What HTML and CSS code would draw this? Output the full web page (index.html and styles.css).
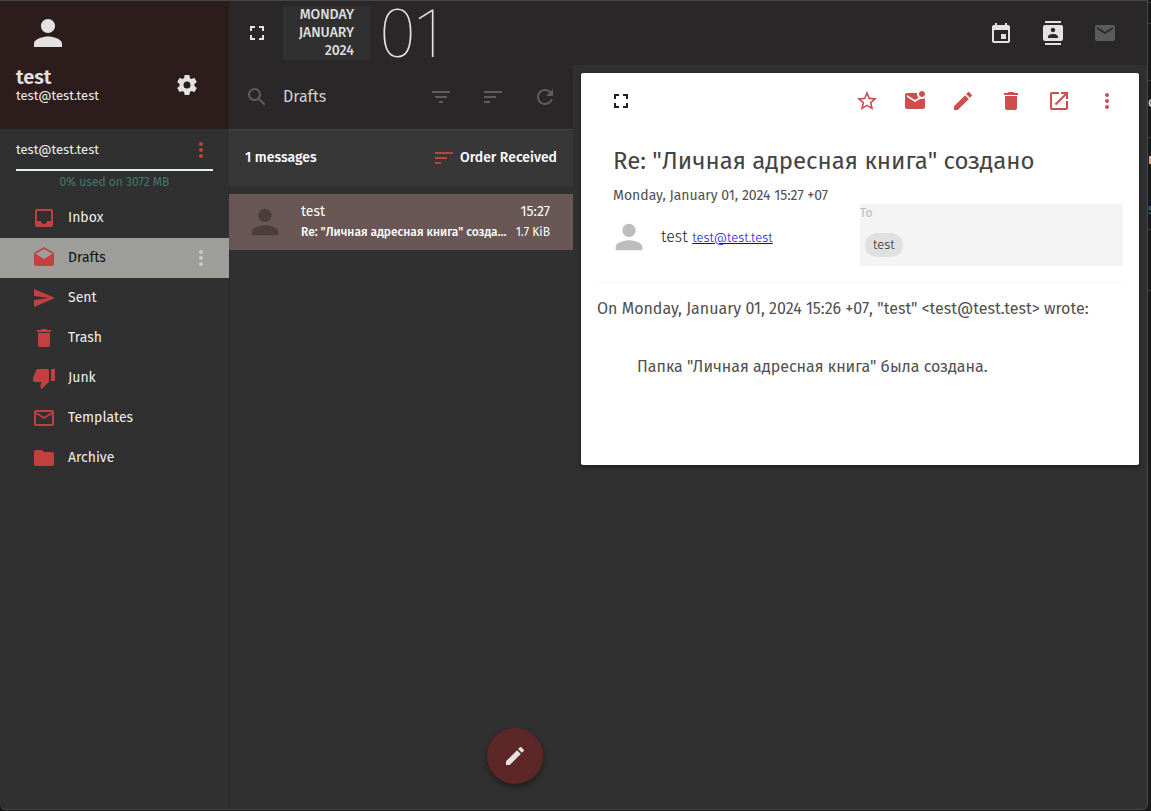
FILE: index.html
```html
<!DOCTYPE html>
<html lang="en">
<head>
<meta charset="utf-8">
<title>Mail</title>
<link rel="stylesheet" href="styles.css">
</head>
<body>
<svg class="defs" aria-hidden="true">
  <symbol id="person" viewBox="0 0 24 24"><path d="M12 12c2.21 0 4-1.79 4-4s-1.79-4-4-4-4 1.790-4 4 1.790 4 4 4zm0 2c-2.670 0-8 1.340-8 4v2h16v-2c0-2.660-5.330-4-8-4z"/></symbol>
  <symbol id="gear" viewBox="0 0 24 24"><path d="M12 15.500A3.500 3.500 0 0 1 8.500 12 3.500 3.500 0 0 1 12 8.500a3.500 3.500 0 0 1 3.500 3.500 3.500 3.500 0 0 1-3.500 3.500m7.430-2.530c.04-.32.07-.64.07-.97s-.03-.66-.07-1l2.110-1.630c.19-.15.24-.42.12-.64l-2-3.460c-.12-.22-.39-.31-.61-.22l-2.490 1c-.52-.39-1.060-.73-1.690-.98l-.37-2.650A.506.506 0 0 0 14 2h-4c-.25 0-.46.18-.5.42l-.37 2.650c-.63.25-1.170.59-1.690.98l-2.490-1c-.22-.09-.49 0-.61.22l-2 3.460c-.13.22-.07.49.12.64L4.570 11c-.04.34-.07.67-.07 1s.03.65.07.97l-2.110 1.660c-.19.15-.25.42-.12.64l2 3.460c.12.22.39.3.61.22l2.490-1.010c.52.4 1.060.74 1.690.99l.37 2.650c.04.24.25.42.5.42h4c.25 0 .46-.18.5-.42l.37-2.650c.63-.26 1.170-.59 1.690-.99l2.490 1.010c.22.08.49 0 .61-.22l2-3.460c.12-.22.07-.49-.12-.64z"/></symbol>
  <symbol id="more" viewBox="0 0 24 24"><path d="M12 8c1.100 0 2-.9 2-2s-.9-2-2-2-2 .9-2 2 .9 2 2 2zm0 2c-1.100 0-2 .9-2 2s.9 2 2 2 2-.9 2-2-.9-2-2-2zm0 6c-1.100 0-2 .9-2 2s.9 2 2 2 2-.9 2-2-.9-2-2-2z"/></symbol>
  <symbol id="inbox" viewBox="0 0 24 24"><path d="M19 3H5c-1.100 0-2 .9-2 2v14c0 1.100.9 2 2 2h14c1.100 0 2-.9 2-2V5c0-1.100-.9-2-2-2zm0 12h-4c0 1.660-1.350 3-3 3s-3-1.340-3-3H5V5h14v10z"/></symbol>
  <symbol id="drafts" viewBox="0 0 24 24"><path d="M21.990 8c0-.72-.37-1.350-.94-1.700L12 1 2.950 6.300C2.380 6.650 2 7.280 2 8v10c0 1.100.9 2 2 2h16c1.100 0 2-.9 2-2l-.01-10zM12 13L3.740 7.840 12 3l8.260 4.840L12 13z"/></symbol>
  <symbol id="send" viewBox="0 0 24 24"><path d="M2.010 21L23 12 2.010 3 2 10l15 2-15 2z"/></symbol>
  <symbol id="trash" viewBox="0 0 24 24"><path d="M6 19c0 1.100.9 2 2 2h8c1.100 0 2-.9 2-2V7H6v12zM19 4h-3.500l-1-1h-5l-1 1H5v2h14V4z"/></symbol>
  <symbol id="junk" viewBox="0 0 24 24"><path d="M15 3H6c-.83 0-1.540.5-1.840 1.220l-3.020 7.050c-.09.23-.14.47-.14.73v2c0 1.100.9 2 2 2h6.310l-.95 4.570-.03.32c0 .41.17.79.44 1.060L9.830 23l6.590-6.590c.36-.36.58-.86.58-1.410V5c0-1.100-.9-2-2-2zm4 0v12h4V3h-4z"/></symbol>
  <symbol id="mail-outline" viewBox="0 0 24 24"><path d="M20 4H4c-1.100 0-2 .9-2 2v12c0 1.100.9 2 2 2h16c1.100 0 2-.9 2-2V6c0-1.100-.9-2-2-2zm0 14H4V8l8 5 8-5v10zm-8-7L4 6h16l-8 5z"/></symbol>
  <symbol id="folder" viewBox="0 0 24 24"><path d="M10 4H4c-1.100 0-2 .9-2 2v12c0 1.100.9 2 2 2h16c1.100 0 2-.9 2-2V8c0-1.100-.9-2-2-2h-8l-2-2z"/></symbol>
  <symbol id="fullscreen" viewBox="0 0 24 24"><path d="M7 14H5v5h5v-2H7v-3zm-2-4h2V7h3V5H5v5zm12 7h-3v2h5v-5h-2v3zM14 5v2h3v3h2V5h-5z"/></symbol>
  <symbol id="search" viewBox="0 0 24 24"><path d="M15.500 14h-.79l-.28-.27C15.410 12.590 16 11.110 16 9.500 16 5.910 13.090 3 9.500 3S3 5.910 3 9.500 5.910 16 9.500 16c1.610 0 3.090-.59 4.230-1.570l.27.28v.79l5 4.990L20.490 19l-4.990-5zm-6 0C7.010 14 5 11.990 5 9.500S7.010 5 9.500 5 14 7.010 14 9.500 11.990 14 9.500 14z"/></symbol>
  <symbol id="filter" viewBox="0 0 24 24"><path d="M10 18h4v-2h-4v2zM3 6v2h18V6H3zm3 7h12v-2H6v2z"/></symbol>
  <symbol id="sort" viewBox="0 0 24 24"><path d="M3 18h6v-2H3v2zM3 6v2h18V6H3zm0 7h12v-2H3v2z"/></symbol>
  <symbol id="refresh" viewBox="0 0 24 24"><path d="M17.650 6.350C16.200 4.900 14.210 4 12 4c-4.420 0-7.990 3.580-7.990 8s3.570 8 7.990 8c3.730 0 6.840-2.550 7.730-6h-2.080c-.82 2.330-3.040 4-5.650 4-3.310 0-6-2.690-6-6s2.690-6 6-6c1.660 0 3.140.69 4.220 1.780L13 11h7V4l-2.350 2.350z"/></symbol>
  <symbol id="calendar" viewBox="0 0 24 24"><path d="M19 4h-1V2h-2v2H8V2H6v2H5c-1.110 0-2 .9-2 2v14c0 1.100.89 2 2 2h14c1.100 0 2-.9 2-2V6c0-1.100-.9-2-2-2zm0 16H5V9h14v11zm-7-7h5v5h-5z"/></symbol>
  <symbol id="contacts" viewBox="0 0 24 24"><path d="M20 0H4v2h16V0zM4 24h16v-2H4v2zM20 4H4c-1.100 0-2 .9-2 2v12c0 1.100.9 2 2 2h16c1.100 0 2-.9 2-2V6c0-1.100-.9-2-2-2zm-8 2.750c1.240 0 2.250 1.010 2.250 2.250s-1.010 2.250-2.250 2.250S9.750 10.240 9.750 9 10.760 6.750 12 6.750zM17 17H7v-1.500c0-1.670 3.330-2.500 5-2.500s5 .83 5 2.500V17z"/></symbol>
  <symbol id="mail" viewBox="0 0 24 24"><path d="M20 4H4c-1.100 0-1.990.9-1.990 2L2 18c0 1.100.9 2 2 2h16c1.100 0 2-.9 2-2V6c0-1.100-.9-2-2-2zm0 4l-8 5-8-5V6l8 5 8-5v2z"/></symbol>
  <symbol id="star" viewBox="0 0 24 24"><path d="M22 9.240l-7.190-.62L12 2 9.190 8.630 2 9.240l5.460 4.730L5.820 21 12 17.270 18.180 21l-1.630-7.030L22 9.240zM12 15.400l-3.760 2.270 1-4.280-3.320-2.880 4.380-.38L12 6.100l1.710 4.040 4.380.38-3.320 2.880 1 4.280L12 15.400z"/></symbol>
  <symbol id="unread" viewBox="0 0 24 24"><path d="M22 8.980V18c0 1.100-.9 2-2 2H4c-1.100 0-2-.9-2-2V6c0-1.100.9-2 2-2h10.100c-.06.320-.1.660-.1 1 0 1.480.65 2.790 1.670 3.710L12 11 4 6v2l8 5 5.300-3.320c.54.2 1.100.320 1.700.320 1.130 0 2.160-.39 3-1.020zM16 5c0 1.660 1.340 3 3 3s3-1.340 3-3-1.340-3-3-3-3 1.340-3 3z"/></symbol>
  <symbol id="pencil" viewBox="0 0 24 24"><path d="M3 17.250V21h3.750L17.810 9.940l-3.750-3.750L3 17.250zM20.710 7.040c.39-.39.39-1.020 0-1.410l-2.340-2.340c-.39-.39-1.020-.39-1.410 0l-1.830 1.830 3.750 3.750 1.830-1.830z"/></symbol>
  <symbol id="open" viewBox="0 0 24 24"><path d="M19 19H5V5h7V3H5c-1.110 0-2 .9-2 2v14c0 1.100.89 2 2 2h14c1.100 0 2-.9 2-2v-7h-2v7zM14 3v2h3.590l-9.830 9.830 1.410 1.410L19 6.410V10h2V3h-7z"/></symbol>
</svg>

<div class="desktop">
<div class="window">
  <aside class="sidebar">
    <header class="profile">
      <svg class="profile-avatar"><use href="#person"/></svg>
      <div class="profile-row">
        <div>
          <div class="profile-name">test</div>
          <div class="profile-mail">test@test.test</div>
        </div>
        <button class="icon-btn" aria-label="Settings"><svg class="icon"><use href="#gear"/></svg></button>
      </div>
    </header>
    <div class="account">
      <span>test@test.test</span>
      <button class="icon-btn red" aria-label="Account options"><svg class="icon"><use href="#more"/></svg></button>
    </div>
    <div class="quota-bar"></div>
    <div class="quota">0% used on 3072 MB</div>
    <nav class="folders">
      <a class="folder" href="#"><svg class="icon"><use href="#inbox"/></svg><span>Inbox</span></a>
      <div class="folder selected"><a class="folder-link" href="#"><svg class="icon"><use href="#drafts"/></svg><span>Drafts</span></a><button class="icon-btn pale" aria-label="Folder options"><svg class="icon"><use href="#more"/></svg></button></div>
      <a class="folder" href="#"><svg class="icon"><use href="#send"/></svg><span>Sent</span></a>
      <a class="folder" href="#"><svg class="icon"><use href="#trash"/></svg><span>Trash</span></a>
      <a class="folder" href="#"><svg class="icon"><use href="#junk"/></svg><span>Junk</span></a>
      <a class="folder" href="#"><svg class="icon"><use href="#mail-outline"/></svg><span>Templates</span></a>
      <a class="folder" href="#"><svg class="icon"><use href="#folder"/></svg><span>Archive</span></a>
    </nav>
  </aside>

  <div class="main">
    <header class="topbar">
      <button class="icon-btn" aria-label="Full screen"><svg class="icon"><use href="#fullscreen"/></svg></button>
      <div class="date"><div>MONDAY</div><div>JANUARY</div><div>2024</div></div>
      <div class="day">01</div>
      <nav class="modules">
        <button class="icon-btn" aria-label="Calendar"><svg class="icon"><use href="#calendar"/></svg></button>
        <button class="icon-btn" aria-label="Contacts"><svg class="icon"><use href="#contacts"/></svg></button>
        <button class="icon-btn dim" aria-label="Mail"><svg class="icon"><use href="#mail"/></svg></button>
      </nav>
    </header>
    <div class="panes">
      <section class="list">
        <header class="list-head">
          <button class="icon-btn" aria-label="Search"><svg class="icon"><use href="#search"/></svg></button>
          <h2 class="list-title">Drafts</h2>
          <button class="icon-btn" aria-label="Filter"><svg class="icon"><use href="#filter"/></svg></button>
          <button class="icon-btn" aria-label="Sort"><svg class="icon"><use href="#sort"/></svg></button>
          <button class="icon-btn" aria-label="Refresh"><svg class="icon"><use href="#refresh"/></svg></button>
        </header>
        <div class="list-sub">
          <span>1 messages</span>
          <button class="order"><svg class="icon"><use href="#sort"/></svg>Order Received</button>
        </div>
        <a class="message" href="#">
          <svg class="avatar"><use href="#person"/></svg>
          <div class="message-text">
            <div class="message-line"><span class="from">test</span><span class="time">15:27</span></div>
            <div class="message-line small"><span class="summary">Re: "Личная адресная книга" создано</span><span class="size">1.7 KiB</span></div>
          </div>
        </a>
        <button class="compose" aria-label="Compose"><svg class="icon"><use href="#pencil"/></svg></button>
      </section>

      <section class="viewer">
        <article class="card">
          <div class="card-bar">
            <button class="icon-btn dark" aria-label="Expand message"><svg class="icon"><use href="#fullscreen"/></svg></button>
            <div class="actions">
              <button class="icon-btn" aria-label="Star"><svg class="icon"><use href="#star"/></svg></button>
              <button class="icon-btn" aria-label="Mark as unread"><svg class="icon"><use href="#unread"/></svg></button>
              <button class="icon-btn" aria-label="Edit"><svg class="icon"><use href="#pencil"/></svg></button>
              <button class="icon-btn" aria-label="Delete"><svg class="icon"><use href="#trash"/></svg></button>
              <button class="icon-btn" aria-label="Open in new window"><svg class="icon"><use href="#open"/></svg></button>
              <button class="icon-btn" aria-label="More"><svg class="icon"><use href="#more"/></svg></button>
            </div>
          </div>
          <h1 class="subject">Re: "Личная адресная книга" создано</h1>
          <div class="envelope">
            <div class="envelope-from">
              <div class="sent-at">Monday, January 01, 2024 15:27 +07</div>
              <div class="sender">
                <svg class="avatar"><use href="#person"/></svg>
                <span class="sender-name">test <a href="#">test@test.test</a></span>
              </div>
            </div>
            <div class="to">
              <div class="to-label">To</div>
              <span class="chip">test</span>
            </div>
          </div>
          <div class="body">
            <p>On Monday, January 01, 2024 15:26 +07, "test" &lt;test@test.test&gt; wrote:</p>
            <blockquote>Папка "Личная адресная книга" была создана.</blockquote>
          </div>
        </article>
      </section>
    </div>
  </div>
</div>
<div class="behind" aria-hidden="true">
  <div class="cell h20"></div>
  <div class="cell h56"></div>
  <div class="cell h56 light">o</div>
  <div class="cell h92">n<span class="blue">s</span></div>
  <div class="cell h60"></div>
  <div class="cell"></div>
</div>
</div>
</body>
</html>
```
FILE: styles.css
```css
* { box-sizing: border-box; }
body {
  margin: 0;
  background: #18191b;
  color: #eee;
  font-family: "Fira Sans", Roboto, "Noto Sans", sans-serif;
  font-size: 14px;
  line-height: 20px;
}
button { border: 0; padding: 0; background: none; color: inherit; font: inherit; cursor: pointer; }
a { color: inherit; text-decoration: none; }
h1, h2, p, blockquote { margin: 0; font-weight: inherit; }
.defs { display: none; }
.icon { display: block; width: 24px; height: 24px; fill: currentColor; flex: none; }
.icon-btn { display: grid; place-items: center; width: 40px; height: 40px; flex: none; color: #e3e1e1; }
.icon-btn.red { color: #c34040; }
.icon-btn.pale { color: #c9c9c7; }
.icon-btn.dark { color: #212121; }
.icon-btn.dim { color: #5b5b5b; }

.desktop { display: flex; height: 100vh; }
.window {
  flex: 1;
  display: flex;
  min-width: 0;
  margin-bottom: 1px;
  background: #303030;
  border: solid #444746;
  border-width: 1px 1px 1px 0;
  border-radius: 0 0 6px 6px;
}

.sidebar { width: 229px; flex: none; box-shadow: 1px 0 #2b2b2b; }
.profile { height: 128px; padding: 11px 22px 0 16px; background: #2c1c1c; }
.profile-avatar { display: block; width: 42px; height: 42px; margin-left: 11px; fill: #e3e1e1; }
.profile-row { display: flex; justify-content: space-between; align-items: center; margin-top: 11px; }
.profile-name { font-size: 20px; font-weight: 600; line-height: 22px; color: #e3e1e1; }
.profile-mail { font-size: 13px; line-height: 16px; }
.account { display: flex; justify-content: space-between; align-items: center; height: 40px; padding: 2px 8px 0 16px; font-size: 13px; }
.quota-bar { height: 2px; margin: 0 16px; background: #e0f2f1; }
.quota { text-align: center; font-size: 12px; line-height: 22px; color: #45776f; }
.folders { padding-top: 5px; }
.folder { display: flex; align-items: center; height: 40px; padding-left: 32px; }
.folder .icon { color: #c34040; margin-right: 12px; }
.folder.selected { padding-right: 8px; background: #9d9e99; color: #111; }
.folder-link { flex: 1; display: flex; align-items: center; height: 40px; }
.folder.selected .pale .icon { color: #c9c9c7; margin-right: 0; }

.main { flex: 1; min-width: 0; display: flex; flex-direction: column; }
.topbar { display: flex; align-items: center; height: 64px; padding: 0 22px 0 8px; background: #292727; }
.date {
  width: 87px; margin-left: 6px; padding-right: 16px;
  background: #303030; color: #dddcdc;
  font-weight: 500; line-height: 18px; text-align: right;
}
.day { margin-left: 8px; font-size: 72px; line-height: 64px; font-weight: 200; color: #e3e1e1; }
.modules { display: flex; gap: 12px; margin-left: auto; }

.panes { flex: 1; display: flex; min-height: 0; }
.list { position: relative; width: 344px; flex: none; }
.list-head { display: flex; align-items: center; height: 65px; padding: 0 8px; gap: 12px; background: #292727; border-bottom: 1px solid #434343; }
.list-head .icon-btn { color: #5e5d5d; }
.list-title { flex: 1; font-size: 16px; color: #d0cfcf; margin-left: -6px; }
.list-sub { display: flex; align-items: center; justify-content: space-between; height: 56px; padding: 0 16px; background: #373737; color: #fff; font-weight: 500; }
.order { display: flex; align-items: center; gap: 4px; }
.order .icon { color: #c34040; }
.message { display: flex; align-items: center; height: 56px; margin-top: 8px; padding: 0 23px 0 16px; background: #695755; color: #fff; }
.avatar { display: block; width: 40px; height: 40px; flex: none; fill: #bdbdbd; }
.message .avatar { fill: #4b3d3c; }
.message-text { flex: 1; min-width: 0; margin-left: 16px; }
.message-line { display: flex; justify-content: space-between; }
.message-line.small { font-size: 12px; gap: 5px; }
.summary { overflow: hidden; text-overflow: ellipsis; white-space: nowrap; font-weight: 500; }
.size { flex: none; }
.compose {
  position: absolute; right: 30px; bottom: 25px;
  display: grid; place-items: center;
  width: 56px; height: 56px; border-radius: 50%;
  background: #5d2727; color: #e6e2e0;
  box-shadow: 0 3px 6px rgba(0, 0, 0, .4);
}

.viewer { flex: 1; min-width: 0; padding: 8px; }
.card { min-height: 392px; padding-bottom: 72px; background: #fff; border-radius: 2px; color: #505050; box-shadow: 0 2px 5px rgba(0, 0, 0, .4); }
.card-bar { display: flex; align-items: center; justify-content: space-between; height: 56px; padding: 0 12px 0 20px; }
.actions { display: flex; gap: 8px; }
.actions .icon-btn { color: #cf4d4d; }
.subject { padding: 16px 32px; font-size: 24px; line-height: 32px; color: #444; }
.envelope { display: flex; align-items: flex-end; margin: -7px 16px 0; padding-bottom: 16px; border-bottom: 1px solid #f8f8f8; }
.envelope-from { flex: 1; padding-left: 16px; }
.sent-at { font-size: 14px; }
.sender { display: flex; align-items: center; gap: 12px; height: 40px; margin: 11px 0 9px -4px; }
.sender-name { font-size: 16px; font-weight: 300; color: #222; }
.sender-name a { color: #00e; font-size: 13px; text-decoration: underline; }
.to { width: 50%; height: 62px; background: #f4f4f4; font-size: 12px; }
.to-label { line-height: 18px; color: #bdbdbd; }
.chip { display: inline-block; margin: 11px 5px 0; padding: 0 8px; border-radius: 12px; background: #e0e0e0; line-height: 24px; font-size: 13px; font-weight: 300; color: #222; }
.body { padding: 16px; font-size: 16px; line-height: 20px; }
.body blockquote { margin: 38px 40px 0; }

.behind { width: 3px; flex: none; overflow: hidden; padding-top: 2px; }
.cell { border-top: 1px solid #3a3b3d; font-size: 14px; line-height: 44px; }
.cell.h20 { height: 21px; }
.cell.h56 { height: 57px; }
.cell.h92 { height: 92px; }
.cell.h60 { height: 61px; }
.blue { display: block; color: #2476b8; line-height: 56px; }
```
